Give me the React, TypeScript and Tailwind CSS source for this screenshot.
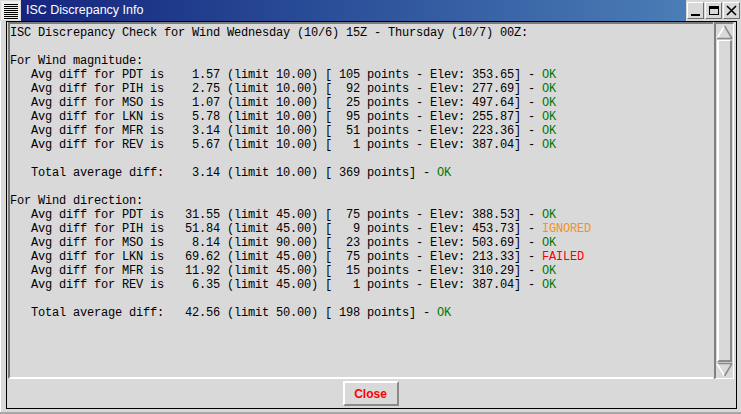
import React from "react";

type Row = [string, string, string, string, string, string];

const magnitude: Row[] = [
  ["PDT", "1.57", "10.00", "105", "353.65", "OK"],
  ["PIH", "2.75", "10.00", "92", "277.69", "OK"],
  ["MSO", "1.07", "10.00", "25", "497.64", "OK"],
  ["LKN", "5.78", "10.00", "95", "255.87", "OK"],
  ["MFR", "3.14", "10.00", "51", "223.36", "OK"],
  ["REV", "5.67", "10.00", "1", "387.04", "OK"],
];

const direction: Row[] = [
  ["PDT", "31.55", "45.00", "75", "388.53", "OK"],
  ["PIH", "51.84", "45.00", "9", "453.73", "IGNORED"],
  ["MSO", "8.14", "90.00", "23", "503.69", "OK"],
  ["LKN", "69.62", "45.00", "75", "213.33", "FAILED"],
  ["MFR", "11.92", "45.00", "15", "310.29", "OK"],
  ["REV", "6.35", "45.00", "1", "387.04", "OK"],
];

function Status({ value }: { value: string }) {
  const color =
    value === "OK"
      ? "text-[#007a00]"
      : value === "IGNORED"
        ? "text-[#f39320]"
        : "text-[#ff0000]";
  return <span className={color}>{value}</span>;
}

function StationLine({ row }: { row: Row }) {
  const [st, diff, lim, pts, elev, status] = row;
  return (
    <div>
      {`   Avg diff for ${st} is ${diff.padStart(7)} (limit ${lim}) [${pts.padStart(4)} points - Elev: ${elev}] - `}
      <Status value={status} />
    </div>
  );
}

function TotalLine({ diff, lim, pts }: { diff: string; lim: string; pts: string }) {
  return (
    <div>
      {`   Total average diff: ${diff.padStart(7)} (limit ${lim}) [${pts.padStart(4)} points] - `}
      <Status value="OK" />
    </div>
  );
}

function TitleButton({ children }: { children: React.ReactNode }) {
  return (
    <div className="w-[17px] h-[17px] bg-[#d9d9d9] border border-t-white border-l-white border-r-[#707070] border-b-[#707070] flex items-center justify-center">
      {children}
    </div>
  );
}

function Scrollbar() {
  return (
    <div className="w-[20px] flex flex-col border-l-2 border-t-2 border-l-[#808080] border-t-[#808080] border-r border-b border-r-white border-b-white">
      {/* up arrow */}
      <svg width="17" height="16" viewBox="0 0 17 16" className="shrink-0">
        <line x1="8.5" y1="2" x2="1" y2="14.5" stroke="#ffffff" strokeWidth="1.5" />
        <line x1="8.5" y1="2" x2="16" y2="14.5" stroke="#8a8a8a" strokeWidth="1.5" />
        <line x1="1" y1="14.5" x2="16" y2="14.5" stroke="#8a8a8a" strokeWidth="1.5" />
      </svg>
      {/* slider */}
      <div className="flex-1 mx-[1px] border-l-2 border-t border-l-white border-t-white border-r-2 border-b-2 border-r-[#8a8a8a] border-b-[#8a8a8a]" />
      {/* down arrow */}
      <svg width="17" height="16" viewBox="0 0 17 16" className="shrink-0">
        <line x1="1" y1="1.5" x2="16" y2="1.5" stroke="#8a8a8a" strokeWidth="1.5" />
        <line x1="1" y1="1.5" x2="8.5" y2="14" stroke="#ffffff" strokeWidth="1.5" />
        <line x1="16" y1="1.5" x2="8.5" y2="14" stroke="#8a8a8a" strokeWidth="1.5" />
      </svg>
    </div>
  );
}

export default function App() {
  return (
    <div className="w-[741px] h-[414px] bg-[#d9d9d9] flex flex-col overflow-hidden border-b-2 border-[#a8a8a8]">
      {/* Title bar */}
      <div className="h-[21px] flex shrink-0">
        <div className="w-[21px] h-[21px] flex items-center justify-center">
          <svg width="19" height="19" viewBox="0 0 19 19">
            <rect x="0" y="0" width="19" height="19" fill="#eeeeee" />
            {[3, 5, 7, 9, 11, 13, 15, 17].map((y) => (
              <line key={y} x1="3" y1={y + 0.5} x2="17" y2={y + 0.5} stroke="#000" strokeWidth="1" />
            ))}
          </svg>
        </div>
        <div className="flex-1 bg-gradient-to-r from-[#17247e] to-[#4b7db6] flex items-center pl-[5px]">
          <span className="text-white text-[12.5px] font-['Liberation_Sans',Arial,sans-serif]">
            ISC Discrepancy Info
          </span>
        </div>
        <div className="flex gap-[1px] items-start pt-[2px] px-[1px]">
          <TitleButton>
            <div className="w-[9px] h-[2px] bg-black mt-[8px]" />
          </TitleButton>
          <TitleButton>
            <div className="w-[10px] h-[9px] border border-black border-t-[3px]" />
          </TitleButton>
          <TitleButton>
            <svg width="11" height="11" viewBox="0 0 11 11">
              <path d="M1 1 L10 10 M10 1 L1 10" stroke="#000" strokeWidth="1.6" />
            </svg>
          </TitleButton>
        </div>
      </div>

      {/* Window body */}
      <div className="flex-1 flex pl-[5px] pr-[4px] pb-[3px] border-l border-l-white">
        <div className="flex-1 border border-black flex flex-col">
          <div className="h-[357px] flex pl-[1px] gap-[1px] pr-[2px]">
            <div className="flex-1 border-l-2 border-t-2 border-l-[#7a7a7a] border-t-[#7a7a7a] border-b-2 border-b-white pt-[2px] pl-0 overflow-hidden font-['Liberation_Mono',monospace] text-[12px] leading-[14px] tracking-[-0.2px] text-black whitespace-pre">
              <div>ISC Discrepancy Check for Wind Wednesday (10/6) 15Z - Thursday (10/7) 00Z:</div>
              <div> </div>
              <div>For Wind magnitude:</div>
              {magnitude.map((r) => (
                <StationLine key={r[0]} row={r} />
              ))}
              <div> </div>
              <TotalLine diff="3.14" lim="10.00" pts="369" />
              <div> </div>
              <div>For Wind direction:</div>
              {direction.map((r) => (
                <StationLine key={r[0]} row={r} />
              ))}
              <div> </div>
              <TotalLine diff="42.56" lim="50.00" pts="198" />
            </div>
            <Scrollbar />
          </div>
          <div className="flex-1 flex justify-center items-start pt-[2px]">
            <button className="w-[56px] h-[25px] -ml-[2px] bg-[#d9d9d9] border-2 border-t-white border-l-white border-r-[#8a8a8a] border-b-[#8a8a8a] text-[#ff0000] font-bold text-[12px] font-['Liberation_Sans',Arial,sans-serif] flex items-center justify-center">
              Close
            </button>
          </div>
        </div>
      </div>
    </div>
  );
}
